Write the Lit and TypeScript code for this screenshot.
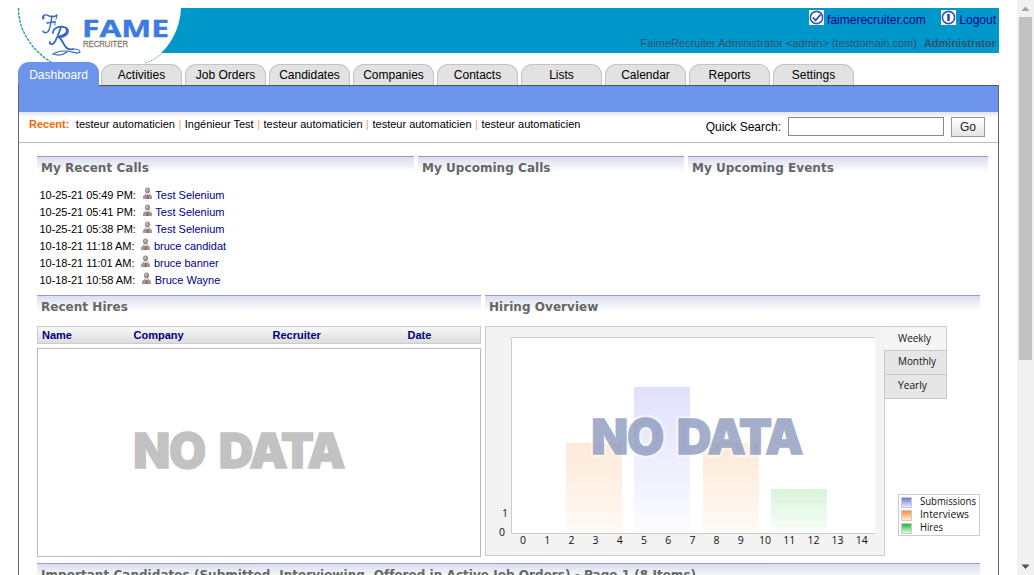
import { LitElement, html, svg, css } from "lit";
import { customElement, property } from "lit/decorators.js";

@customElement("brand-logo")
class BrandLogo extends LitElement {
  static styles = css`
    :host { display: block; width: 164px; height: 56px; }
    svg { display: block; overflow: visible; }
    .name { font: bold 23.5px "Open Sans", sans-serif; fill: #3c7ce0; stroke: #3c7ce0; stroke-width: 0.4; }
    .sub { font: 8.6px "Liberation Sans", sans-serif; fill: #857c6c; stroke: #857c6c; stroke-width: 0.3; }
  `;
  render() {
    return html`<svg width="164" height="56" viewBox="0 0 164 56">
      <path d="M0 0H163C162.500 14 157 32 143 45.200L127 56H0Z" fill="#fff" />
      <path d="M0.500 0C0.500 12 4 22 9 30C15 40 23 48 33 54" fill="none" stroke="#1497ac" stroke-width="1.3" stroke-dasharray="3 1" />
      <path d="M144 45C139 50 134 53 127 55" fill="none" stroke="#3aa3a8" stroke-width="0.8" stroke-dasharray="2 1" />
      <g fill="none" stroke="#3468c4" stroke-linecap="round">
        <path d="M26 10c-2-3 2-4 5-2 3 1 6 1 8-1M34 8c-1 5-1 9-3 14-1 3-5 4-6 1M29 15c3-1 5-1 8-1M27 7c-2 0-3 2-2 4" stroke-width="1.4" />
        <path d="M39 8l-1 3M37 13v4" stroke-width="1" />
        <path d="M35 25c0-5 6-7 11-6 6 2 5 9-4 10M43 19c-2 6-4 12-7 16-2 2-5 1-4-1M41 29c3 3 4 6 6 9 2 3 5 4 8 3" stroke-width="1.8" />
        <path d="M55 41c4 0 7 1 7 3-2 3-7-1-15-1-5 0-9 1-12 3 5 2 10 1 14-2" stroke-width="1.2" />
        <path d="M48 20c4 4-1 7-7 9" stroke-width="2.4" />
      </g>
      <text class="name" x="64" y="28.5" textLength="87" lengthAdjust="spacingAndGlyphs">FAME</text>
      <text class="sub" x="65" y="38.5" textLength="45" lengthAdjust="spacingAndGlyphs">RECRUITER</text>
    </svg>`;
  }
}

@customElement("section-title")
class SectionTitle extends LitElement {
  static styles = css`
    :host {
      display: block; box-sizing: border-box; height: 24px; padding: 4px 0 0 4px;
      border-top: 1px solid #9999cc; white-space: nowrap;
      background: linear-gradient(#dadeee, #fff 15px);
      font: bold 12px/15px "DejaVu Sans", Verdana, sans-serif; letter-spacing: 0.04px; color: #666;
    }
  `;
  render() {
    return html`<slot></slot>`;
  }
}

const BARS = [
  [566, 443, "o"],
  [634, 387, "b"],
  [703, 443, "o"],
  [771, 489, "g"],
] as const;

@customElement("hiring-chart")
class HiringChart extends LitElement {
  static styles = css`
    :host { display: block; width: 495px; height: 230px; }
    svg { display: block; overflow: visible; }
    text { font: 11px "Open Sans", sans-serif; fill: #111; }
    .axis { text-anchor: middle; font-size: 10.5px; }
    .none, .halo { font: 900 48px Inter, sans-serif; }
    .none { fill: #8391b9; stroke: #8391b9; stroke-width: 1.3; opacity: 0.73; }
    .halo { fill: none; stroke: #fff; stroke-width: 6; stroke-opacity: 0.5; stroke-linejoin: round; }
  `;
  render() {
    const grad = (id: string, a: string, b: string) => svg`<linearGradient id=${id} x1="0" y1="0" x2="0" y2="1">
      <stop offset="0" stop-color=${a} /><stop offset="1" stop-color=${b} /></linearGradient>`;
    const legend = [["Submissions", "b", 56], ["Interviews", "o", 49], ["Hires", "g", 23]] as const;
    const tabs = [["Weekly", 342, 33], ["Monthly", 365, 38], ["Yearly", 389, 29]] as const;
    const spots = "591.3 627 663 676.8 707.5 739 765.3";
    return html`<svg width="495" height="230" viewBox="485 326 495 230">
      <defs>
        ${grad("b", "#e0e0fb", "#fcfcff")}${grad("o", "#fde9d6", "#fffaf6")}${grad("g", "#d8f4da", "#fafffa")}
        ${grad("lb", "#6c6ce4", "#f0f0ff")}${grad("lo", "#f58c28", "#fff4e4")}${grad("lg", "#16b52a", "#eaffea")}
      </defs>
      <rect x="485.5" y="326.5" width="399" height="229" fill="#f3f3f3" stroke="#ccc" />
      <path d="M884 326.5H946.5V350.5H884Z" fill="#f5f5f5" />
      <path d="M884 326.5H946.5V350.5" fill="none" stroke="#ccc" />
      <path d="M884.5 350.5H946.5V374.5H884.5ZM884.5 374.5H946.5V398.5H884.5Z" fill="#e6e6e6" stroke="#c8c8c8" />
      <rect x="511" y="337" width="364" height="197" fill="#fff" />
      <path d="M875 337.5H511.5V533.5H875" fill="none" stroke="#ccc" />
      ${BARS.map(([x, y, c]) => svg`<rect x=${x} y=${y} width="56" height=${533 - y} fill=${`url(#${c})`} />`)}
      <text class="halo" x=${spots} y="454" aria-hidden="true">NO DATA</text>
      <text class="none" x=${spots} y="454">NO DATA</text>
      <text class="axis" x="505" y="517">1</text>
      <text class="axis" x="502" y="536">0</text>
      ${Array.from({ length: 15 }, (_, i) => svg`<text class="axis" x=${523 + i * 24.2} y="544">${i}</text>`)}
      ${tabs.map(([t, y, w]) => svg`<text x="898" y=${y} textLength=${w} lengthAdjust="spacingAndGlyphs">${t}</text>`)}
      <rect x="898.5" y="494.5" width="81" height="41" fill="#fff" stroke="#ccc" />
      ${legend.map(([t, c, w], i) => svg`
        <rect x="901.5" y=${497.5 + i * 13} width="10" height="10" fill=${`url(#l${c})`} stroke="#ccc" />
        <text x="920" y=${505 + i * 13} textLength=${w} lengthAdjust="spacingAndGlyphs">${t}</text>`)}
    </svg>`;
  }
}

const TABS = ["Dashboard", "Activities", "Job Orders", "Candidates", "Companies", "Contacts", "Lists", "Calendar", "Reports", "Settings"];
const RECENT = ["testeur automaticien", "Ingénieur Test", "testeur automaticien", "testeur automaticien", "testeur automaticien"];
const CALLS = [
  ["10-25-21 05:49 PM:", "Test Selenium"],
  ["10-25-21 05:41 PM:", "Test Selenium"],
  ["10-25-21 05:38 PM:", "Test Selenium"],
  ["10-18-21 11:18 AM:", "bruce candidat"],
  ["10-18-21 11:01 AM:", "bruce banner"],
  ["10-18-21 10:58 AM:", "Bruce Wayne"],
];

@customElement("app-root")
class AppRoot extends LitElement {
  @property() active = "Dashboard";

  static styles = css`
    :host {
      display: flex; height: 575px; overflow: hidden; background: #fff;
      font: 11px/13px "Liberation Sans", Arial, sans-serif; color: #000;
    }
    * { box-sizing: border-box; }
    .page { width: 981px; margin: 8px 18px 0; flex: none; white-space: nowrap; }
    .top { display: flex; justify-content: space-between; height: 45px; background: #0097cb; }
    .account { display: flex; flex-direction: column; align-items: flex-end; padding: 2px 3px 0 0; }
    .links { display: flex; font-size: 12px; line-height: 21px; color: #00008b; }
    .links svg { margin-right: 3px; }
    .links .out { margin-left: 15.5px; }
    .who { margin-top: 6px; color: #33536a; }
    .who b { margin-left: 7px; }
    .tabs { display: flex; align-items: flex-end; gap: 3px; height: 32px; position: relative; }
    .tab {
      width: 81px; height: 21px; border: 1px solid #c4c4c4; border-bottom: 0; border-radius: 11px 11px 0 0;
      background: #e2e2e2; text-align: center; font-size: 12px; line-height: 20px;
    }
    .tab.on { height: 23px; margin-right: -1px; border: 0; background: #6c94ea; color: #fff; line-height: 27px; }
    .body { height: 490px; border: 1px solid #666; border-width: 0 1px; }
    .band { display: flex; height: 27px; background: #6c94ea; }
    .band::before { content: ""; width: 80px; }
    .band::after { content: ""; flex: 1; border-top: 1px solid #555; }
    .bar {
      display: flex; justify-content: space-between; height: 31px; padding: 5px 13px 0 10px;
      border-bottom: 1px solid #bbb; background: linear-gradient(#e4e4e4, #fff 6px);
    }
    .recent { display: flex; padding-top: 1px; }
    .recent b { margin-right: 6.5px; color: #ff6600; }
    .recent .item + .item::before { content: "|"; margin: 0 3.5px; color: #ff9c70; }
    .search { display: flex; font-size: 12px; }
    .search label { margin: 3px 7px 0 0; line-height: 14px; }
    .search input { width: 156px; height: 19px; margin-right: 7px; border: 1px solid #888; background: #fff; }
    .search button {
      width: 34px; height: 20px; padding: 0; border: 1px solid #999; background: linear-gradient(#fff, #e4e4e4);
      font: 12px "Liberation Sans", sans-serif; color: #222;
    }
    .content { padding: 13px 10px 0 18px; }
    .row1 { display: grid; grid-template-columns: 377px 266px 300px; gap: 4px; height: 139px; }
    .calls { padding: 7px 0 0 2.5px; }
    .call { display: flex; height: 17px; line-height: 17px; }
    .call span { letter-spacing: -0.05px; }
    .call a { color: #00008b; }
    .call svg { margin: 0 3.5px 0 7px; }
    .row2 { display: grid; grid-template-columns: 444px 495px; gap: 4px; height: 268px; }
    .overview section-title, .hires section-title { height: 31px; }
    .heads {
      display: grid; grid-template-columns: 91.5px 139px 135px 1fr; height: 18px; padding-left: 4px;
      border: 1px solid #ccc; background: linear-gradient(#f8f8f8, #dcdcdc);
      font-weight: bold; line-height: 17px; color: #00007b;
    }
    .empty { height: 209px; margin-top: 4px; border: 1px solid #bbb; }
    .empty svg { display: block; }
    .empty text { font: 900 48px Inter, sans-serif; fill: #c2c2c2; stroke: #c2c2c2; stroke-width: 1.3; }
    .wide { width: 943px; }
    .scroll {
      display: flex; flex-direction: column; align-items: center; width: 17px; background: #f1f1f1;
    }
    .scroll .thumb { width: 13px; height: 343px; background: #c1c1c1; }
    .scroll .down { margin-top: auto; }
  `;

  private check() {
    return html`<svg width="15" height="15" viewBox="0 0 15 15"><path fill="#fff" d="M0 0h15v15H0z" />
      <circle cx="7.5" cy="7.5" r="6.1" fill="none" stroke="#3355b8" stroke-width="1.6" />
      <path d="M4 7.4l2.6 2.9 5-5.6" fill="none" stroke="#3355b8" stroke-width="1.8" /></svg>`;
  }

  private power() {
    return html`<svg class="out" width="15" height="15" viewBox="0 0 15 15"><path fill="#fff" d="M0 0h15v15H0z" />
      <circle cx="7.5" cy="7.5" r="6.1" fill="none" stroke="#3355b8" stroke-width="1.6" />
      <path d="M7.5 4v7" stroke="#1c3fae" stroke-width="2.4" /></svg>`;
  }

  private person() {
    return html`<svg width="9" height="13" viewBox="0 0 9 13">
      <path d="M0 12V9.600Q0.500 8 2.400 7.300L3.300 5H5.700L6.600 7.300Q8.500 8 9 9.600V12Z" fill="#9c9c9c" />
      <ellipse cx="4.500" cy="3.300" rx="2.500" ry="2.900" fill="#8a8a8a" />
      <ellipse cx="4.200" cy="2.900" rx="1.400" ry="1.700" fill="#b8b8b8" />
      <path d="M2.700 7.200L4.500 8.600L6.300 7.200L5.700 6H3.300Z" fill="#ddd" />
      <path d="M4 8H5.200L5.700 12H3.600Z" fill="#b85050" /></svg>`;
  }

  render() {
    return html`
      <div class="page">
        <header class="top">
          <brand-logo></brand-logo>
          <div class="account">
            <div class="links">${this.check()}<span>faimerecruiter.com</span>${this.power()}<span>Logout</span></div>
            <div class="who">FaimeRecruiter Administrator &lt;admin&gt; (testdomain.com)<b>Administrator</b></div>
          </div>
        </header>
        <nav class="tabs">${TABS.map((t) => html`<div class="tab ${t === this.active ? "on" : ""}">${t}</div>`)}</nav>
        <div class="body">
          <div class="band"></div>
          <div class="bar">
            <div class="recent"><b>Recent:</b>${RECENT.map((t) => html`<span class="item">${t}</span>`)}</div>
            <div class="search"><label>Quick Search:</label><input /><button>Go</button></div>
          </div>
          <main class="content">
            <div class="row1">
              <section>
                <section-title>My Recent Calls</section-title>
                <div class="calls">
                  ${CALLS.map(([d, n]) => html`<div class="call"><span>${d}</span>${this.person()}<a>${n}</a></div>`)}
                </div>
              </section>
              <section-title>My Upcoming Calls</section-title>
              <section-title>My Upcoming Events</section-title>
            </div>
            <div class="row2">
              <section class="hires">
                <section-title>Recent Hires</section-title>
                <div class="heads"><span>Name</span><span>Company</span><span>Recruiter</span><span>Date</span></div>
                <div class="empty"><svg width="442" height="207">
                  <text x="95.3 131 167 180.8 211.5 243 269.3" y="119">NO DATA</text></svg></div>
              </section>
              <section class="overview">
                <section-title>Hiring Overview</section-title>
                <hiring-chart></hiring-chart>
              </section>
            </div>
            <section-title class="wide">Important Candidates (Submitted, Interviewing, Offered in Active Job Orders) - Page 1 (8 Items)</section-title>
          </main>
        </div>
      </div>
      <div class="scroll">
        <svg width="17" height="17"><path d="M4.5 11L8.5 6.5L12.5 11Z" fill="#a3a3a3" /></svg>
        <div class="thumb"></div>
        <svg class="down" width="17" height="17"><path d="M4.5 6.5L8.5 11L12.5 6.5Z" fill="#505050" /></svg>
      </div>`;
  }
}
